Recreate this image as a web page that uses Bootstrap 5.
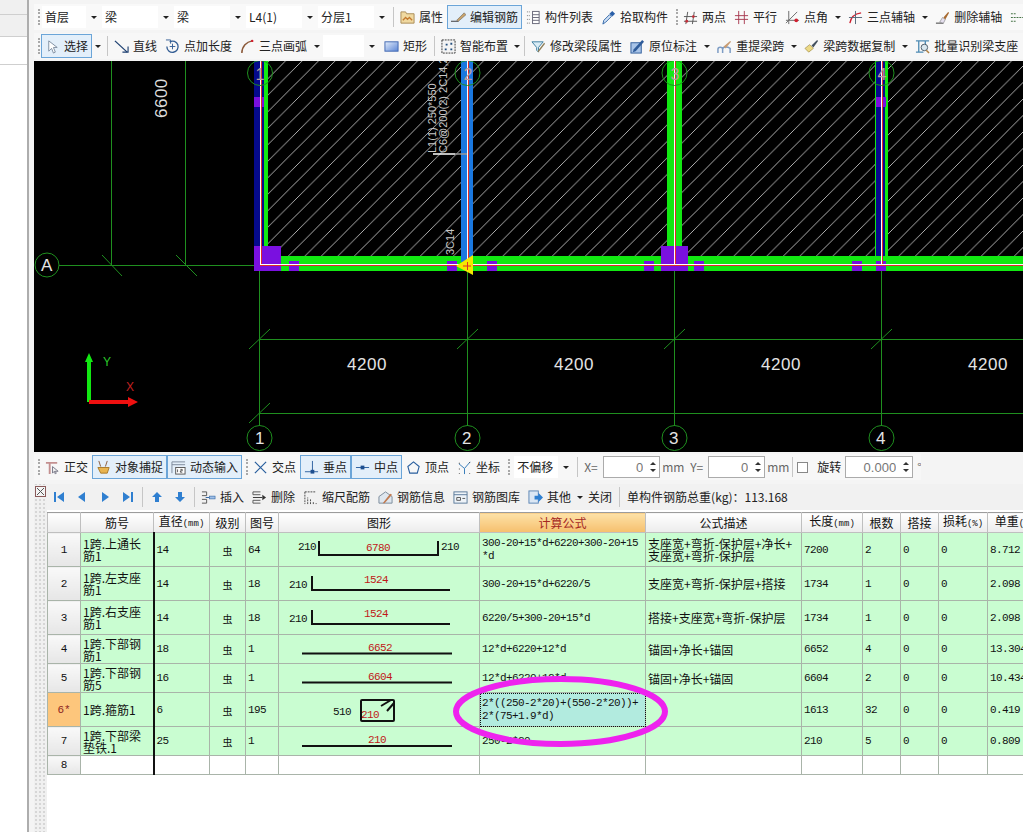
<!DOCTYPE html>
<html lang="zh-CN">
<head>
  <meta charset="UTF-8">
  <meta name="viewport" content="width=device-width, initial-scale=1">
  <title>钢筋编辑</title>
  <link href="https://cdn.jsdelivr.net/npm/bootstrap@5.3.0/dist/css/bootstrap.min.css" rel="stylesheet">
  <style>
    html, body { width: 1023px; height: 832px; overflow: hidden; }
    body { font-family: "Noto Sans CJK SC", "Liberation Sans", sans-serif; font-size: 12px; line-height: 14px; color: #222; background: #f4f4f4; }

    /* left docked panel */
    .side-strip { width: 29px; flex: none; background: #fff; border-right: 2px solid #adadad; }
    .side-row { background: #f0f0f0; border-bottom: 1px solid #cfcfcf; }
    .side-r1 { height: 15px; }
    .side-r2 { height: 22px; }
    .side-r3 { height: 28px; background: #fff; }

    .work-area { width: 994px; flex: none; padding-left: 5px; }

    /* toolbars */
    .tool-row { height: 26px; flex: none; padding-left: 4px; white-space: nowrap; overflow: hidden; }
    .tool-top { margin-top: 4px; height: 26px; background: #f9f9f9; width: 989px; }
    .tool-second { margin-top: 3px; margin-bottom: 2px; background: #f7f7f7; }
    .tool-third { margin-top: 2px; width: 887px; background: #f7f7f7; }
    .grip { width: 3px; height: 16px; flex: none; border-left: 2px dotted #a9a9a9; }
    .grip-gap { margin-left: 4px; }
    .tool-sep { width: 1px; height: 20px; flex: none; background: #c6c6c6; margin: 0 2px 0 3px; }
    .tool-btn { display: flex; align-items: center; gap: 4px; height: 24px; padding: 0 3px; border: 1px solid transparent; border-radius: 0; font-size: 12px; line-height: 14px; color: #222; flex: none; --bs-btn-hover-border-color: transparent; }
    .tool-btn.is-on { border-color: #6ba5d8; background: #e3effa; }
    .tool-btn svg { width: 15px; height: 15px; flex: none; }
    .caret-box { width: 12px; height: 16px; flex: none; display: flex; align-items: center; justify-content: center; }
    .caret-box::after { content: ""; border: 3px solid transparent; border-top: 3px solid #222; border-bottom: 0; }
    .caret-short { width: 9px; }
    .sel-box { height: 22px; flex: none; display: flex; align-items: center; }
    .sel-face { flex-grow: 1; height: 100%; background: #fff; padding: 4px 3px; }
    .sel-box .caret-box { width: 16px; }
    .sel-60 { width: 60px; margin-left: 1px; }
    .sel-72 { width: 72px; }
    .sel-57 { width: 57px; }
    .sel-off { width: 60px; margin-left: 3px; }
    .lbl { color: #666; flex: none; }
    .lbl-x { margin: 0 3px 0 4px; width: 16px; }
    .lbl-y { margin: 0 2px 0 6px; width: 16px; }
    .lbl-mm { margin-left: 2px; width: 22px; }
    .spin-box { height: 22px; width: 57px; flex: none; display: flex; border: 1px solid #ababab; background: #fff; }
    .spin-wide { width: 68px; margin-left: 4px; }
    .spin-box .form-control { border: 0; border-radius: 0; padding: 0 3px; height: 20px; min-height: 0; font-size: 13px; color: #777; text-align: right; background: transparent; min-width: 0; font-family: "Liberation Sans", sans-serif; }
    .spin-arrows { width: 13px; flex: none; display: flex; flex-direction: column; align-items: center; justify-content: space-around; padding: 3px 0; }
    .spin-up { border: 3px solid transparent; border-bottom: 3px solid #333; border-top: 0; }
    .spin-dn { border: 3px solid transparent; border-top: 3px solid #333; border-bottom: 0; }
    .tick-box { width: 11px; height: 11px; margin: 0 9px 0 2px !important; border-radius: 0 !important; border: 1px solid #888; flex: none; float: none; }

    /* drawing */
    .cad-view { display: block; width: 989px; height: 391px; background: #000; flex: none; }
    .cad-view text { font-family: "Liberation Sans", sans-serif; }

    /* rebar panel */
    .rebar-panel { flex-grow: 1; min-height: 0; margin-top: 4px; }
    .dot-strip { width: 13px; flex: none; padding-top: 2px; background-color: #f0f0f0; background-image: radial-gradient(#d6d6d6 1px, transparent 1px); background-size: 4px 4px; background-position: 0 14px; }
    .dot-strip svg { display: block; width: 11px; height: 11px; background: #f0f0f0; margin-left: 1px; }
    .rebar-body { width: 976px; flex: none; background: #fff; overflow: hidden; }
    .tool-rebar { padding-left: 0; height: 26px; background: #f1f1f1; margin-bottom: 2px; }
    .tool-btn.nav-btn { width: 23px; padding: 0; justify-content: center; }
    .tool-btn.nav-btn svg { width: 12px; height: 12px; }
    .sum-text { margin-left: 5px; }

    .sheet-wrap { width: 976px; overflow: hidden; position: relative; flex-grow: 1; }
    .rebar-table { width: 1000px; table-layout: fixed; border-collapse: collapse; margin: 0; font-size: 12px; line-height: 13px; --bs-table-bg: transparent; --bs-table-border-color: #a9b4a9; --bs-table-color: #111; }
    .rebar-table > :not(caption) > * > * { padding: 1px 2px 0; vertical-align: middle; box-shadow: none; border: 1px solid #a9b4a9; }
    .rebar-table thead th { height: 20px; padding: 0; font-weight: 400; text-align: center; background: linear-gradient(#fff, #ececec); border-color: #bfbfbf; border-top-color: #9c9c9c; white-space: nowrap; }
    .rebar-table thead th.col-sorted { background: linear-gradient(#fde2a8, #f6bf6d); color: #a5271f; }
    .unit { font-family: "Liberation Mono", monospace; font-size: 9px; }
    .rebar-table tbody tr { background: #c9fdd1; }
    .rebar-table tbody td { font-family: "Liberation Mono", "Noto Sans CJK SC", monospace; font-size: 11px; letter-spacing: -.6px; }
    .rebar-table tbody td.hz { font-family: "Noto Sans CJK SC", sans-serif; font-size: 12px; letter-spacing: 0; line-height: 12px; }
    .rebar-table tbody td.hz-mid { font-family: "Noto Sans CJK SC", sans-serif; text-align: center; letter-spacing: 0; font-size: 10px; }
    .rebar-table tbody th { font-family: "Liberation Mono", monospace; font-size: 11px; font-weight: 400; text-align: center; background: linear-gradient(#f9f9f9, #e6e6e6); }
    .rebar-table tbody th.row-cur { background: #fdc67c; color: #8c1f1f; }
    .rebar-table tbody td:nth-child(2) { border-right: 2px solid #111; }
    .rebar-table tbody td.shape { padding: 0; }
    .rebar-table tbody td.shape svg { display: block; }
    .rebar-table tbody td.shape text { font-family: "Liberation Mono", monospace; font-size: 11px; letter-spacing: -.6px; fill: #111; }
    .rebar-table tbody td.shape text.len { fill: #c01818; }
    .rebar-table tbody td.cell-cur { background: #b2ebdf; outline: 1px dotted #111; outline-offset: -1px; }
    .rebar-table tbody tr.row-blank { background: #fff; }
    .h-tall { height: 34px; }
    .h-low { height: 29px; }
    .h-blank { height: 19px; }
    .ring-note { position: absolute; left: 406px; top: 164px; width: 215px; height: 71px; pointer-events: none; }
  </style>
</head>
<body class="d-flex">
  <div class="side-strip">
    <div class="side-row side-r1"></div>
    <div class="side-row side-r2"></div>
    <div class="side-row side-r3"></div>
  </div>

  <div class="work-area d-flex flex-column">
    <!-- first toolbar -->
    <div class="tool-row tool-top d-flex align-items-center">
      <span class="grip"></span>
      <div class="sel-box sel-60"><div class="sel-face">首层</div><span class="caret-box"></span></div>
      <div class="sel-box sel-72"><div class="sel-face">梁</div><span class="caret-box"></span></div>
      <div class="sel-box sel-72"><div class="sel-face">梁</div><span class="caret-box"></span></div>
      <div class="sel-box sel-72"><div class="sel-face">L4(1)</div><span class="caret-box"></span></div>
      <div class="sel-box sel-72"><div class="sel-face">分层1</div><span class="caret-box"></span></div>
      <span class="tool-sep"></span>
      <button class="btn tool-btn"><svg viewBox="0 0 16 16"><path d="M1 2h5l1 2h8v10H1z" fill="#f0d9a0" stroke="#a98b55"/><path d="M3 11l3-3 2 2 2-2 3 3" fill="none" stroke="#c47a30" stroke-width="1.400"/></svg>属性</button>
      <button class="btn tool-btn is-on"><svg viewBox="0 0 16 16"><path d="M0 12h8" stroke="#333" fill="none"/><path d="M6 11l8-8 2 2-8 7z" fill="#c9a36a" stroke="#666" stroke-width=".6"/></svg>编辑钢筋</button>
      <button class="btn tool-btn"><svg viewBox="0 0 16 16"><path d="M1 2h3M1 6h3M1 10h3M1 14h3" stroke="#777" stroke-dasharray="1 1"/><rect x="7" y="1.500" width="7" height="13" fill="#fff" stroke="#667"/><path d="M7 5h7M7 8h7M7 11h7" stroke="#667"/></svg>构件列表</button>
      <button class="btn tool-btn"><svg viewBox="0 0 16 16"><path d="M2 15l1-4 6-6 2 2-6 6z" fill="#cfe0f5" stroke="#3268a8"/><path d="M9 4l3-3 3 3-3 3z" fill="#2a5fa8"/></svg>拾取构件</button>
      <span class="grip ms-1"></span>
      <button class="btn tool-btn"><svg viewBox="0 0 16 16"><path d="M1 12h14M1 7h14M5 2L3 15M12 2l-2 13" stroke="#555" fill="none"/><circle cx="11" cy="7" r="1.500" fill="#c0303a"/><circle cx="4" cy="12" r="1.500" fill="#c0303a"/></svg>两点</button>
      <button class="btn tool-btn"><svg viewBox="0 0 16 16"><path d="M1 6h14M1 10h14M5 1v14M11 1v14" stroke="#a83a50" fill="none"/></svg>平行</button>
      <button class="btn tool-btn"><svg viewBox="0 0 16 16"><path d="M1 11h14M4 1v14M1 14L13 2" stroke="#666" fill="none"/><circle cx="12" cy="11" r="2" fill="#d02030"/></svg>点角</button>
      <span class="caret-box"></span>
      <button class="btn tool-btn"><svg viewBox="0 0 16 16"><path d="M2 14C3 7 7 4 14 3" stroke="#d02030" fill="none" stroke-width="1.400"/><path d="M8 1v14M1 8h14" stroke="#567" fill="none"/></svg>三点辅轴</button>
      <span class="caret-box"></span>
      <button class="btn tool-btn"><svg viewBox="0 0 16 16"><path d="M1 14h8" stroke="#333"/><path d="M5 13l3-5 3 2-2 4z" fill="#e6e0f0" stroke="#777" stroke-width=".6"/><path d="M9 8l5-6 1 1-4 7z" fill="#a86a30"/></svg>删除辅轴</button>
      <button class="btn tool-btn"><svg viewBox="0 0 16 16"><path d="M1 4h6M1 8h14M1 12h6" stroke="#3a6a3a" stroke-dasharray="2 1"/></svg></button>
    </div>

    <!-- second toolbar -->
    <div class="tool-row tool-second d-flex align-items-center">
      <span class="grip"></span>
      <button class="btn tool-btn is-on"><svg viewBox="0 0 16 16"><path d="M4 2v11l3-3 2 5 2-1-2-5h4z" fill="#fff" stroke="#7d8da0"/></svg>选择</button>
      <span class="caret-box"></span>
      <span class="tool-sep"></span>
      <button class="btn tool-btn"><svg viewBox="0 0 16 16"><path d="M1 2l13 12" stroke="#1d3f70" stroke-width="1.400" fill="none"/><path d="M9 14h6V8" stroke="#1d3f70" stroke-width="1.200" fill="none"/></svg>直线</button>
      <button class="btn tool-btn"><svg viewBox="0 0 16 16"><path d="M5 3a6 6 0 1 1-3 5" fill="none" stroke="#345e94" stroke-width="1.400"/><path d="M1 1h5v4" fill="none" stroke="#345e94"/><path d="M8 5v6M5 8h6" stroke="#345e94"/></svg>点加长度</button>
      <button class="btn tool-btn"><svg viewBox="0 0 16 16"><path d="M2 15C2 8 7 3 13 2" fill="none" stroke="#8c5a3a" stroke-width="1.600"/><circle cx="13" cy="2" r="1.300" fill="#d02030"/></svg>三点画弧</button>
      <span class="caret-box"></span>
      <div class="sel-box sel-57"><div class="sel-face"></div><span class="caret-box"></span></div>
      <button class="btn tool-btn"><svg viewBox="0 0 16 16"><defs><linearGradient id="gradRect" x1="0" y1="0" x2="1" y2="1"><stop offset="0" stop-color="#e4edfb"/><stop offset="1" stop-color="#5b86d6"/></linearGradient></defs><rect x="1" y="3" width="14" height="10" fill="url(#gradRect)" stroke="#3f66b0"/></svg>矩形</button>
      <span class="tool-sep"></span>
      <button class="btn tool-btn"><svg viewBox="0 0 16 16"><rect x="1" y="1" width="14" height="14" fill="#f4f4f4" stroke="#333" stroke-dasharray="2 1"/><path d="M5 5h2v2H5zM10 4h2v2h-2zM4 10h2v2H4zM10 10h2v2h-2z" fill="#25507f"/></svg>智能布置</button>
      <span class="caret-box caret-short"></span>
      <span class="tool-sep"></span>
      <button class="btn tool-btn"><svg viewBox="0 0 16 16"><path d="M1 3h12L8 9v5L6 12V9z" fill="#d9ecf5" stroke="#3c7d9f"/><path d="M7 13l7-9 1 1-7 9z" fill="#8c7c55"/></svg>修改梁段属性</button>
      <button class="btn tool-btn"><svg viewBox="0 0 16 16"><rect x="1" y="4" width="11" height="11" fill="#a8c4e8" stroke="#2f5c9a"/><path d="M4 11L13 1l2 2-9 10-3 1z" fill="#2f5c9a"/></svg>原位标注</button>
      <span class="caret-box"></span>
      <button class="btn tool-btn"><svg viewBox="0 0 16 16"><path d="M1 15v-4c0-3 5-3 5 0v4M6 15v-4c0-3 5-3 8-1v5" fill="none" stroke="#7d9cc4" stroke-width="1.600"/><path d="M7 8l7-6 1 1-6 7z" fill="#c99c72"/></svg>重提梁跨</button>
      <span class="caret-box"></span>
      <button class="btn tool-btn"><svg viewBox="0 0 16 16"><path d="M1 10l5-4 4 4-5 4z" fill="#ecd985" stroke="#8f7a30" stroke-width=".6"/><path d="M8 7l6-6 1 1-5 7z" fill="#44505e"/></svg>梁跨数据复制</button>
      <span class="caret-box"></span>
      <button class="btn tool-btn"><svg viewBox="0 0 16 16"><path d="M1 2h14M1 14h8M4 2v12M11 2v5" stroke="#4e8bb4" stroke-width="1.400" fill="none"/><circle cx="10" cy="9" r="3.500" fill="#d8e6ee" stroke="#4a5a66"/><path d="M12 12l3 3" stroke="#b08040" stroke-width="1.600"/></svg>批量识别梁支座</button>
    </div>

    <!-- drawing area, coordinates are screen coordinates -->
    <svg class="cad-view" viewBox="34 61 989 391">
      <defs>
        <pattern id="hatch" width="16.500" height="16.500" patternUnits="userSpaceOnUse">
          <path d="M-1 17.500L17.500 -1" stroke="#d8d8d8" stroke-width=".8"/>
        </pattern>
      </defs>
      <rect x="268" y="61" width="755" height="195" fill="url(#hatch)"/>

      <!-- axis grid -->
      <g stroke="#1f8f1f" fill="none">
        <path d="M111.500 61V265M185.500 61V265M59 265.500H1023"/>
        <path d="M259.500 271V426M467.500 271V426M674.500 271V426M881.500 271V426"/>
        <path d="M259 339.500H1023M259 413.500H1023"/>
        <path d="M102 255L122 276M176 255L197 276"/>
        <path d="M249 349L270 329M249 423L270 403M457 349L478 329M664 349L685 329M871 349L892 329"/>
        <circle cx="47" cy="265" r="12"/>
        <circle cx="259.500" cy="438" r="12.500"/><circle cx="467.500" cy="438" r="12.500"/><circle cx="674.500" cy="438" r="12.500"/><circle cx="881.500" cy="438" r="12.500"/>
      </g>

      <!-- columns and beams -->
      <rect x="254" y="61" width="10" height="190" fill="#050a8c"/>
      <rect x="264" y="61" width="4" height="190" fill="#12e812"/>
      <rect x="461" y="61" width="12" height="200" fill="#1a78e0"/>
      <rect x="667" y="61" width="15" height="190" fill="#12e812"/>
      <rect x="875" y="61" width="13" height="200" fill="#12e812"/>
      <rect x="876" y="61" width="9" height="200" fill="#050a8c"/>
      <rect x="281" y="256" width="742" height="15" fill="#12e812"/>
      <rect x="461" y="256" width="12" height="6" fill="#1a78e0"/>
      <g fill="#7a10e0">
        <rect x="254" y="97" width="10" height="10"/>
        <rect x="876" y="97" width="10" height="10"/>
        <rect x="254" y="246" width="27" height="25"/>
        <rect x="661" y="246" width="27" height="25"/>
        <rect x="289" y="261" width="10" height="10"/>
        <rect x="447" y="261" width="10" height="10"/>
        <rect x="487" y="261" width="10" height="10"/>
        <rect x="644" y="261" width="10" height="10"/>
        <rect x="694" y="261" width="10" height="10"/>
        <rect x="852" y="261" width="10" height="10"/>
        <rect x="876" y="261" width="10" height="10"/>
      </g>
      <g fill="none">
        <path d="M261.500 61V265M468.500 61V265M675.500 61V265M882.500 61V265" stroke="#e02a2a"/>
        <path d="M260.500 61V265M467.500 61V265M674.500 61V265M881.500 61V265" stroke="#fff"/>
        <path d="M260 264.500H1023" stroke="#fff"/>
        <path d="M260 265.500H1023" stroke="#e02a2a"/>
      </g>
      <path d="M456 266L473 255V275z" fill="#f4e800"/>
      <path d="M463 266h8M467.500 262v8" stroke="#e02a2a"/>
      <path d="M433 154H455" stroke="#fff" stroke-width="1.500"/>
      <path d="M455 154H467" stroke="#999" stroke-width="1.500"/>

      <!-- labels -->
      <g fill="#c8c8c8" font-size="11">
        <text transform="translate(436 153) rotate(-90)">L1(1) 250*550</text>
        <text transform="translate(447 153) rotate(-90)">C6@200(2) 2C14,2</text>
        <text transform="translate(454 255) rotate(-90)">3C14</text>
      </g>
      <text transform="translate(167 118) rotate(-90)" fill="#ddd" font-size="17" letter-spacing=".5">6600</text>
      <g fill="#e4e4e4" font-size="17" text-anchor="middle" letter-spacing=".5">
        <text x="367" y="370">4200</text>
        <text x="574" y="370">4200</text>
        <text x="781" y="370">4200</text>
        <text x="988" y="370">4200</text>
        <text x="47" y="271">A</text>
        <text x="260" y="444">1</text>
        <text x="467" y="444">2</text>
        <text x="674" y="444">3</text>
        <text x="881" y="444">4</text>
      </g>
      <g fill="none" stroke="#1f8f1f">
        <circle cx="260" cy="73" r="12.500"/><circle cx="467.500" cy="73" r="12.500"/><circle cx="674.500" cy="73" r="12.500"/><circle cx="881.500" cy="73" r="12.500"/>
      </g>
      <g fill="#b8a0a0" font-size="16" text-anchor="middle">
        <text x="260" y="80">1</text>
        <text x="468" y="80">2</text>
        <text x="675" y="80">3</text>
        <text x="882" y="80">4</text>
      </g>

      <!-- coordinate axes -->
      <path d="M87 402V362H85L89 353L93 362H91V402z" fill="#12e812"/>
      <path d="M89 400H128V397L138 402L128 407V404H89z" fill="#f01010"/>
      <text x="103" y="366" fill="#2ac82a" font-size="12">Y</text>
      <text x="126" y="391" fill="#c02020" font-size="12">X</text>
    </svg>

    <!-- third toolbar -->
    <div class="tool-row tool-third d-flex align-items-center">
      <span class="grip"></span>
      <button class="btn tool-btn"><svg viewBox="0 0 16 16"><path d="M1 3h12M5 3v12" stroke="#c49090" stroke-width="2" fill="none"/><path d="M8 7v7l2-2 1 3 1-1-1-2h3z" fill="#eee" stroke="#778"/></svg>正交</button>
      <button class="btn tool-btn is-on"><svg viewBox="0 0 16 16"><path d="M3 1l2 6M12 1l-2 6" stroke="#8a5a3a" fill="none"/><path d="M2 8h12l-2 6H5z" fill="#e8b450" stroke="#a97a2a"/></svg>对象捕捉</button>
      <button class="btn tool-btn is-on"><svg viewBox="0 0 16 16"><path d="M1 2h14M1 5h14M1 2v12" stroke="#7c8a9a" fill="none"/><rect x="5" y="8" width="10" height="7" fill="#fff" stroke="#555"/><path d="M7 10v3M10 10h2v1.500h-2V13h2" stroke="#333" fill="none" stroke-width=".8"/></svg>动态输入</button>
      <span class="grip grip-gap"></span>
      <button class="btn tool-btn"><svg viewBox="0 0 16 16"><path d="M2 2l12 12M14 2L2 14" stroke="#2a5f9e" stroke-width="1.300"/></svg>交点</button>
      <button class="btn tool-btn is-on"><svg viewBox="0 0 16 16"><path d="M1 12.500h14M9 1v11" stroke="#2a5f9e" fill="none"/><rect x="7" y="10.500" width="4" height="4" fill="#1d4f90"/></svg>垂点</button>
      <button class="btn tool-btn is-on"><svg viewBox="0 0 16 16"><path d="M1 8h14" stroke="#2a5f9e"/><rect x="6" y="6" width="4" height="4" fill="#1d4f90"/></svg>中点</button>
      <button class="btn tool-btn"><svg viewBox="0 0 16 16"><path d="M8 2l6 5-2 7H4L2 7z" fill="none" stroke="#2a5f9e" stroke-width="1.200"/></svg>顶点</button>
      <button class="btn tool-btn"><svg viewBox="0 0 16 16"><path d="M2 4l6 5 6-7M8 9v6" fill="none" stroke="#2f78b8"/><path d="M2 3h1v1H2zM13 2h1v1h-1zM2 14h1v1H2zM13 14h1v1h-1zM2 9h1v1H2z" fill="#444"/></svg>坐标</button>
      <span class="grip grip-gap"></span>
      <div class="sel-box sel-off"><div class="sel-face">不偏移</div><span class="caret-box"></span></div>
      <span class="tool-sep"></span>
      <span class="lbl lbl-x">X=</span>
      <div class="spin-box"><input class="form-control" value="0"><span class="spin-arrows"><i class="spin-up"></i><i class="spin-dn"></i></span></div>
      <span class="lbl lbl-mm">mm</span>
      <span class="lbl lbl-y">Y=</span>
      <div class="spin-box"><input class="form-control" value="0"><span class="spin-arrows"><i class="spin-up"></i><i class="spin-dn"></i></span></div>
      <span class="lbl lbl-mm">mm</span>
      <span class="tool-sep"></span>
      <input class="form-check-input tick-box" type="checkbox">
      <span class="flex-none">旋转</span>
      <div class="spin-box spin-wide"><input class="form-control" value="0.000"><span class="spin-arrows"><i class="spin-up"></i><i class="spin-dn"></i></span></div>
      <span class="lbl ms-1">°</span>
    </div>

    <!-- rebar panel -->
    <div class="rebar-panel d-flex">
      <div class="dot-strip">
        <svg viewBox="0 0 11 11"><rect x=".5" y=".5" width="10" height="10" fill="#f4f4f4" stroke="#8a5a5a"/><path d="M2 2l7 7M9 2L2 9" stroke="#555"/></svg>
      </div>
      <div class="rebar-body d-flex flex-column">
        <div class="tool-row tool-rebar d-flex align-items-center">
          <button class="btn tool-btn nav-btn"><svg viewBox="0 0 12 12"><path d="M1 1h2v10H1zM11 1v10L4 6z" fill="#2f7fd0"/></svg></button>
          <button class="btn tool-btn nav-btn"><svg viewBox="0 0 12 12"><path d="M9 1v10L2 6z" fill="#2f7fd0"/></svg></button>
          <button class="btn tool-btn nav-btn"><svg viewBox="0 0 12 12"><path d="M3 1v10l7-5z" fill="#2f7fd0"/></svg></button>
          <button class="btn tool-btn nav-btn"><svg viewBox="0 0 12 12"><path d="M1 1v10l7-5zM9 1h2v10H9z" fill="#2f7fd0"/></svg></button>
          <span class="tool-sep"></span>
          <button class="btn tool-btn nav-btn"><svg viewBox="0 0 12 12"><path d="M6 1l5 5H8v5H4V6H1z" fill="#2f7fd0"/></svg></button>
          <button class="btn tool-btn nav-btn"><svg viewBox="0 0 12 12"><path d="M6 11l5-5H8V1H4v5H1z" fill="#2f7fd0"/></svg></button>
          <span class="tool-sep"></span>
          <button class="btn tool-btn"><svg viewBox="0 0 16 16"><path d="M1 2h5v4H1M1 10h5v4H1" fill="none" stroke="#555"/><path d="M5 8h4" stroke="#2a5f9e"/><rect x="9" y="6.500" width="6" height="3" fill="#9fc0e8" stroke="#2a5f9e" stroke-width=".6"/></svg>插入</button>
          <button class="btn tool-btn"><svg viewBox="0 0 16 16"><path d="M9 2H1v3h8M9 11H1v3h8" fill="none" stroke="#555"/><path d="M1 8h10" stroke="#333"/><path d="M11 5l4 3-4 3z" fill="#333"/></svg>删除</button>
          <button class="btn tool-btn"><svg viewBox="0 0 16 16"><path d="M2 2h11M2 2v13M5 15V8M8 15V10M11 15v-3M14 15v-1" stroke="#444" stroke-dasharray="2 1" fill="none"/></svg>缩尺配筋</button>
          <button class="btn tool-btn"><svg viewBox="0 0 16 16"><path d="M1 7l7-5 7 5v7H1z" fill="#dfe7ef" stroke="#7a8a9a"/><path d="M5 14L13 4l2 1-8 9z" fill="#c07a50"/></svg>钢筋信息</button>
          <button class="btn tool-btn"><svg viewBox="0 0 16 16"><rect x="1" y="2" width="14" height="12" fill="#eef3f8" stroke="#5a7a9a"/><path d="M1 5h14" stroke="#5a7a9a"/><path d="M4 8h4v3H4zM10 9h3" stroke="#555" fill="none"/></svg>钢筋图库</button>
          <button class="btn tool-btn"><svg viewBox="0 0 16 16"><rect x="1" y="1" width="10" height="13" fill="#dbe7f4" stroke="#5a84b4"/><path d="M7 6h4V3l5 5-5 5v-3H7z" fill="#2f7fd0"/></svg>其他</button>
          <span class="caret-box caret-short"></span>
          <button class="btn tool-btn">关闭</button>
          <span class="tool-sep"></span>
          <span class="sum-text">单构件钢筋总重(kg)：113.168</span>
        </div>

        <div class="sheet-wrap">
          <table class="table table-bordered rebar-table">
            <colgroup>
              <col width="33"><col width="73"><col width="56"><col width="36"><col width="33"><col width="201"><col width="166"><col width="156"><col width="61"><col width="38"><col width="38"><col width="49"><col width="60">
            </colgroup>
            <thead>
              <tr>
                <th></th><th>筋号</th><th>直径<span class="unit">(mm)</span></th><th>级别</th><th>图号</th><th>图形</th>
                <th class="col-sorted">计算公式</th><th>公式描述</th><th>长度<span class="unit">(mm)</span></th><th>根数</th><th>搭接</th><th>损耗<span class="unit">(%)</span></th><th>单重<span class="unit">(kg)</span></th>
              </tr>
            </thead>
            <tbody>
              <tr class="h-tall">
                <th>1</th><td class="hz">1跨.上通长筋1</td><td>14</td><td class="hz-mid">虫</td><td>64</td>
                <td class="shape"><svg width="200" height="33" viewBox="279 533 200 33"><text x="298" y="550">210</text><path d="M319 541V555H438V541" fill="none" stroke="#111" stroke-width="2"/><text class="len" x="366" y="551">6780</text><text x="441" y="550">210</text></svg></td>
                <td>300-20+15*d+6220+300-20+15<br>*d</td><td class="hz">支座宽+弯折-保护层+净长+<br>支座宽+弯折-保护层</td><td>7200</td><td>2</td><td>0</td><td>0</td><td>8.712</td>
              </tr>
              <tr class="h-tall">
                <th>2</th><td class="hz">1跨.左支座筋1</td><td>14</td><td class="hz-mid">虫</td><td>18</td>
                <td class="shape"><svg width="200" height="33" viewBox="279 567 200 33"><text x="289" y="588">210</text><path d="M312 576V590H450" fill="none" stroke="#111" stroke-width="2"/><text class="len" x="364" y="583">1524</text></svg></td>
                <td>300-20+15*d+6220/5</td><td class="hz">支座宽+弯折-保护层+搭接</td><td>1734</td><td>1</td><td>0</td><td>0</td><td>2.098</td>
              </tr>
              <tr class="h-tall">
                <th>3</th><td class="hz">1跨.右支座筋1</td><td>14</td><td class="hz-mid">虫</td><td>18</td>
                <td class="shape"><svg width="200" height="33" viewBox="279 601 200 33"><text x="289" y="622">210</text><path d="M312 610V624H450" fill="none" stroke="#111" stroke-width="2"/><text class="len" x="364" y="617">1524</text></svg></td>
                <td>6220/5+300-20+15*d</td><td class="hz">搭接+支座宽+弯折-保护层</td><td>1734</td><td>1</td><td>0</td><td>0</td><td>2.098</td>
              </tr>
              <tr class="h-low">
                <th>4</th><td class="hz">1跨.下部钢筋1</td><td>18</td><td class="hz-mid">虫</td><td>1</td>
                <td class="shape"><svg width="200" height="28" viewBox="279 635 200 28"><path d="M302 653.500H452" stroke="#111" stroke-width="2"/><text class="len" x="368" y="651">6652</text></svg></td>
                <td>12*d+6220+12*d</td><td class="hz">锚固+净长+锚固</td><td>6652</td><td>4</td><td>0</td><td>0</td><td>13.304</td>
              </tr>
              <tr class="h-low">
                <th>5</th><td class="hz">1跨.下部钢筋5</td><td>16</td><td class="hz-mid">虫</td><td>1</td>
                <td class="shape"><svg width="200" height="28" viewBox="279 664 200 28"><path d="M302 682.500H452" stroke="#111" stroke-width="2"/><text class="len" x="368" y="680">6604</text></svg></td>
                <td>12*d+6220+12*d</td><td class="hz">锚固+净长+锚固</td><td>6604</td><td>2</td><td>0</td><td>0</td><td>10.434</td>
              </tr>
              <tr class="h-tall">
                <th class="row-cur">6*</th><td class="hz">1跨.箍筋1</td><td>6</td><td class="hz-mid">虫</td><td>195</td>
                <td class="shape"><svg width="200" height="33" viewBox="279 693 200 33"><text x="333" y="715">510</text><rect x="361" y="700" width="33" height="21" rx="1" fill="none" stroke="#111" stroke-width="2"/><path d="M381 706L391 700M387 711L394 703" stroke="#111" stroke-width="2"/><text class="len" x="361" y="718">210</text></svg></td>
                <td class="cell-cur">2*((250-2*20)+(550-2*20))+<br>2*(75+1.9*d)</td><td></td><td>1613</td><td>32</td><td>0</td><td>0</td><td>0.419</td>
              </tr>
              <tr class="h-low">
                <th>7</th><td class="hz">1跨.下部梁垫铁.1</td><td>25</td><td class="hz-mid">虫</td><td>1</td>
                <td class="shape"><svg width="200" height="28" viewBox="279 727 200 28"><path d="M302 746H452" stroke="#111" stroke-width="2"/><text class="len" x="368" y="743">210</text></svg></td>
                <td>250-2*20</td><td></td><td>210</td><td>5</td><td>0</td><td>0</td><td>0.809</td>
              </tr>
              <tr class="h-blank row-blank">
                <th>8</th><td></td><td></td><td></td><td></td><td></td><td></td><td></td><td></td><td></td><td></td><td></td><td></td>
              </tr>
            </tbody>
          </table>
          <svg class="ring-note" viewBox="0 0 215 71"><ellipse cx="107.500" cy="35.500" rx="104.500" ry="32.500" fill="none" stroke="#ee22ee" stroke-width="6"/></svg>
        </div>
      </div>
    </div>
  </div>

  <script src="https://cdn.jsdelivr.net/npm/bootstrap@5.3.0/dist/js/bootstrap.bundle.min.js"></script>
</body>
</html>
